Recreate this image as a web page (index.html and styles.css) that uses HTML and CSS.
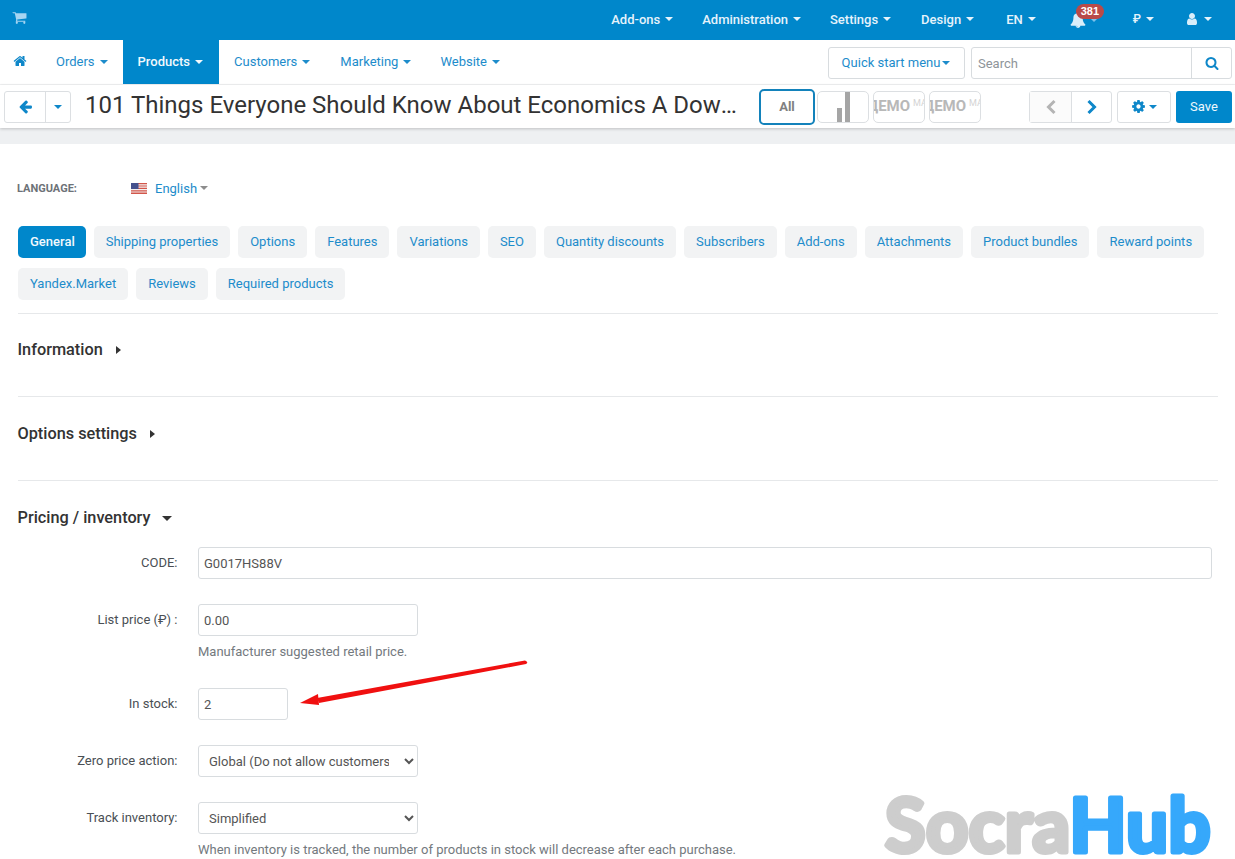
FILE: index.html
```html
<!DOCTYPE html>
<html lang="en">
<head>
<meta charset="utf-8">
<title>Edit product</title>
<link rel="stylesheet" href="styles.css">
</head>
<body>
<div class="page">
  <header class="topbar">
    <svg class="ico cart" viewBox="0 0 1792 1792"><path d="M704 1536q0 52-38 90t-90 38-90-38-38-90 38-90 90-38 90 38 38 90zm896 0q0 52-38 90t-90 38-90-38-38-90 38-90 90-38 90 38 38 90zm128-1088v512q0 24-16.5 42.5t-40.5 21.5l-1044 122q13 60 13 70 0 16-24 64h920q26 0 45 19t19 45-19 45-45 19h-1024q-26 0-45-19t-19-45q0-11 8-31.5t16-36 21.5-40 15.5-29.5l-177-823h-204q-26 0-45-19t-19-45 19-45 45-19h256q16 0 28.5 6.5t19.5 15.5 13 24.5 8 26 5.5 29.5 4.5 26h1201q26 0 45 19t19 45z"/></svg>
    <nav class="topmenu">
      <a class="topitem">Add-ons<i class="caret"></i></a>
      <a class="topitem tight">Administration<i class="caret"></i></a>
      <a class="topitem tight">Settings<i class="caret"></i></a>
      <a class="topitem">Design<i class="caret"></i></a>
      <a class="topitem enitem">EN<i class="caret"></i></a>
      <a class="topitem bellitem">
        <svg class="ico bell" viewBox="0 0 1792 1792"><path d="M912 1696q0-16-16-16-59 0-101.5-42.5t-42.5-101.5q0-16-16-16t-16 16q0 73 51.5 124.5t124.5 51.5q16 0 16-16zm816-288q0 52-38 90t-90 38h-448q0 106-75 181t-181 75-181-75-75-181h-448q-52 0-90-38t-38-90q50-42 91-88t85-119.5 74.5-158.5 50-206 19.5-260q0-152 117-282.5t307-158.5q-8-19-8-39 0-40 28-68t68-28 68 28 28 68q0 20-8 39 190 28 307 158.5t117 282.5q0 139 19.5 260t50 206 74.5 158.5 85 119.5 91 88z"/></svg>
        <span class="badge">381</span><i class="caret"></i>
      </a>
      <a class="topitem rub">₽<i class="caret"></i></a>
      <a class="topitem useritem">
        <svg class="ico user" viewBox="0 0 1792 1792"><path d="M1536 1399q0 109-62.5 187t-150.5 78h-854q-88 0-150.5-78t-62.5-187q0-85 8.5-160.5t31.5-152 58.5-131 94-89 134.5-34.5q131 128 313 128t313-128q76 0 134.5 34.5t94 89 58.5 131 31.5 152 8.5 160.5zm-256-887q0 159-112.5 271.5t-271.5 112.5-271.5-112.5-112.5-271.5 112.5-271.5 271.5-112.5 271.5 112.5 112.5 271.5z"/></svg>
        <i class="caret"></i>
      </a>
    </nav>
  </header>

  <div class="navbar">
    <nav class="mainmenu">
      <a class="mainitem homeitem"><svg class="ico home" viewBox="0 0 1792 1792"><path d="M1472 992v480q0 26-19 45t-45 19h-384v-384h-256v384h-384q-26 0-45-19t-19-45v-480q0-1 .5-3t.5-3l575-474 575 474q1 2 1 6zm223-69l-62 74q-8 9-21 11h-3q-13 0-21-7l-692-577-692 577q-12 8-24 7-13-2-21-11l-62-74q-8-10-7-23.5t11-21.5l719-599q32-26 76-26t76 26l244 204v-195q0-14 9-23t23-9h192q14 0 23 9t9 23v408l219 182q10 8 11 21.5t-7 23.5z"/></svg></a>
      <a class="mainitem ordersitem">Orders<i class="caret"></i></a>
      <a class="mainitem active">Products<i class="caret"></i></a>
      <a class="mainitem">Customers<i class="caret"></i></a>
      <a class="mainitem marketitem">Marketing<i class="caret"></i></a>
      <a class="mainitem">Website<i class="caret"></i></a>
    </nav>
    <div class="navtools">
      <button class="quick">Quick start menu<i class="caret"></i></button>
      <div class="searchbox">
        <input class="searchinput" type="text" placeholder="Search">
        <span class="searchbtn"><svg class="ico search" viewBox="0 0 1792 1792"><path d="M1216 832q0-185-131.5-316.5t-316.5-131.5-316.5 131.5-131.5 316.5 131.5 316.5 316.5 131.5 316.5-131.5 131.5-316.5zm512 832q0 52-38 90t-90 38q-54 0-90-38l-343-342q-179 124-399 124-143 0-273.5-55.5t-225-150-150-225-55.5-273.5 55.5-273.5 150-225 225-150 273.5-55.5 273.5 55.5 225 150 150 225 55.5 273.5q0 220-124 399l343 343q37 37 37 90z"/></svg></span>
      </div>
    </div>
  </div>

  <div class="toolbar">
    <div class="btngroup back">
      <span class="gbtn backarrow"><svg class="ico arrowleft" viewBox="0 0 1792 1792"><path d="M1664 896v128q0 53-32.5 90.5t-84.5 37.5h-704l293 294q38 36 38 90t-38 90l-75 76q-37 37-90 37-52 0-91-37l-651-652q-37-37-37-90 0-52 37-91l651-650q38-38 91-38 52 0 90 38l75 74q38 38 38 91t-38 91l-293 293h704q52 0 84.5 37.5t32.5 90.5z"/></svg></span>
      <span class="gbtn backcaret"><i class="caret"></i></span>
    </div>
    <h1 class="title">101 Things Everyone Should Know About Economics A Down to Earth Guide</h1>
    <div class="thumbs">
      <span class="thumb all">All</span>
      <span class="thumb bars"><i class="bar low"></i><i class="bar high"></i></span>
      <span class="thumb demo"><b>ДЕМО</b><small>МАГ</small></span>
      <span class="thumb demo"><b>ДЕМО</b><small>МАГ</small></span>
    </div>
    <div class="btngroup pager">
      <span class="gbtn pg disabled"><svg class="ico chev" viewBox="0 0 12 16"><path d="M9.5 2 3.5 8l6 6"/></svg></span>
      <span class="gbtn pg"><svg class="ico chev" viewBox="0 0 12 16"><path d="M2.5 2l6 6-6 6"/></svg></span>
    </div>
    <span class="gearbtn"><svg class="ico cog" viewBox="0 0 1792 1792"><path d="M1152 896q0-106-75-181t-181-75-181 75-75 181 75 181 181 75 181-75 75-181zm512-109v222q0 12-8 23t-20 13l-185 28q-19 54-39 91 35 50 107 138 10 12 10 25t-9 23q-27 37-99 108t-94 71q-12 0-26-9l-138-108q-44 23-91 38-16 136-29 186-7 28-36 28h-222q-14 0-24.5-8.5t-11.5-21.5l-28-184q-49-16-90-37l-141 107q-10 9-25 9-14 0-25-11-126-114-165-168-7-10-7-23 0-12 8-23 15-21 51-66.5t54-70.5q-27-50-41-99l-183-27q-13-2-21-12.5t-8-23.5v-222q0-12 8-23t19-13l186-28q14-46 39-92-40-57-107-138-10-12-10-24 0-10 9-23 26-36 98.5-107.5t94.5-71.5q13 0 26 10l138 107q44-23 91-38 16-136 29-186 7-28 36-28h222q14 0 24.5 8.5t11.5 21.5l28 184q49 16 90 37l142-107q9-9 24-9 13 0 25 10 129 119 165 170 7 8 7 22 0 12-8 23-15 21-51 66.5t-54 70.5q26 50 41 98l183 28q13 2 21 12.5t8 23.5z"/></svg><i class="caret"></i></span>
    <button class="save">Save</button>
  </div>
  <div class="band"></div>

  <main class="content">
    <div class="langrow">
      <span class="langlabel">LANGUAGE:</span>
      <span class="flag">
        <svg viewBox="0 0 16 11" width="16" height="11"><rect width="16" height="11" fill="#f4f0f0"/><path d="M0 0h16v1.2H0zM0 2.4h16v1.2H0zM0 4.8h16v1.2H0zM0 7.2h16v1.2H0zM0 9.6h16V11H0z" fill="#d2564a"/><rect width="7.5" height="6" fill="#45528e"/></svg>
      </span>
      <a class="langlink">English</a><i class="caret graycaret"></i>
    </div>

    <div class="tabs">
      <a class="tab current">General</a>
      <a class="tab">Shipping properties</a>
      <a class="tab">Options</a>
      <a class="tab">Features</a>
      <a class="tab">Variations</a>
      <a class="tab">SEO</a>
      <a class="tab">Quantity discounts</a>
      <a class="tab">Subscribers</a>
      <a class="tab">Add-ons</a>
      <a class="tab">Attachments</a>
      <a class="tab">Product bundles</a>
      <a class="tab">Reward points</a>
      <a class="tab">Yandex.Market</a>
      <a class="tab">Reviews</a>
      <a class="tab">Required products</a>
    </div>

    <section class="section">
      <h2 class="sectionhead">Information<i class="tri right"></i></h2>
    </section>
    <section class="section">
      <h2 class="sectionhead">Options settings<i class="tri right"></i></h2>
    </section>
    <section class="section open">
      <h2 class="sectionhead">Pricing / inventory<i class="tri down"></i></h2>
      <div class="form">
        <div class="field codefield">
          <label class="flabel">CODE:</label>
          <input class="finput wide" type="text" value="G0017HS88V">
        </div>
        <div class="field">
          <label class="flabel">List price (₽) :</label>
          <div class="fcontrol">
            <input class="finput mid" type="text" value="0.00">
            <p class="help">Manufacturer suggested retail price.</p>
          </div>
        </div>
        <div class="field stockfield">
          <label class="flabel">In stock:</label>
          <input class="finput short" type="text" value="2">
        </div>
        <div class="field zerofield">
          <label class="flabel">Zero price action:</label>
          <select class="finput mid fselect"><option>Global (Do not allow customers to add the product to cart)</option></select>
        </div>
        <div class="field trackfield">
          <label class="flabel">Track inventory:</label>
          <div class="fcontrol">
            <select class="finput mid fselect"><option>Simplified</option></select>
            <p class="help">When inventory is tracked, the number of products in stock will decrease after each purchase.</p>
          </div>
        </div>
      </div>
    </section>
  </main>

  <svg class="redarrow" viewBox="0 0 240 60" width="240" height="60"><path d="M227 4.5Q231 6 228 8L21 47 19 42Z" fill="#f01010"/><path d="M2 47 20 38 21 49Z" fill="#f01010"/></svg>
  <svg class="watermark" viewBox="0 0 350 80" width="350" height="80"><text class="wm-text" x="1" y="69"><tspan class="wm-a">Socra</tspan><tspan class="wm-b">Hub</tspan></text></svg>
</div>
</body>
</html>
```
FILE: styles.css
```css
* { box-sizing: border-box; }
html, body { margin: 0; padding: 0; }
body { font-family: Roboto, "Liberation Sans", sans-serif; font-size: 13px; color: #333; background: #fff; }
.page { position: relative; width: 1235px; height: 859px; overflow: hidden; }
.ico { display: block; fill: currentColor; }
.caret { display: inline-block; width: 0; height: 0; margin-left: 5px; border-top: 4px solid currentColor; border-left: 4px solid transparent; border-right: 4px solid transparent; vertical-align: middle; }

.topbar { height: 40px; background: #0087cb; display: flex; align-items: center; justify-content: space-between; padding-left: 12px; color: #fff; }
.cart { width: 15px; height: 15px; color: #a6d5f2; margin-top: -6px; }
.topmenu { display: flex; align-items: center; padding-right: 8px; }
.topitem { display: flex; align-items: center; padding: 0 15px 2px; color: #e6f3fb; font-weight: 500; white-space: nowrap; height: 40px; }
.tight { padding-left: 14px; }
.enitem { padding-left: 17px; }
.bellitem { position: relative; padding: 0 20px 0 19px; }
.bell { width: 16px; height: 16px; color: #d9eefa; }
.badge { position: absolute; left: 25px; top: 4px; padding: 0 5px; height: 15px; line-height: 15px; border-radius: 8px; background: #b94a48; color: #fff; font-size: 11px; font-weight: 700; font-family: "Liberation Sans", sans-serif; }
.bellitem .caret { margin-left: 4px; border-top-color: #7cc1ea; }
.rub { padding: 0 16px 2px 15px; font-size: 12px; }
.useritem { padding: 0 15px 2px 15px; }
.user { width: 14px; height: 14px; color: #d9eefa; }

.navbar { height: 45px; display: flex; justify-content: space-between; border-bottom: 1px solid #f1f2f3; background: #fff; }
.mainmenu { display: flex; height: 44px; }
.mainitem { display: flex; align-items: center; padding: 0 15px 1px; color: #1d8ccb; height: 44px; }
.homeitem { padding: 0 14px 1px 13px; }
.home { width: 14px; height: 14px; color: #0e87c9; margin-top: -2px; }
.ordersitem { padding-right: 15px; }
.mainitem.active { background: #0087cb; color: #f2f9fd; font-weight: 500; padding-right: 16px; }
.marketitem { padding-right: 14px; }
.navtools { display: flex; gap: 6px; padding: 7px 3px 0 0; }
.quick { width: 137px; height: 32px; border: 1px solid #d8dcdf; border-radius: 3px; background: #fff; color: #1d8ccb; font: 13px Roboto, sans-serif; padding: 0 1px 2px 0; }
.quick .caret { margin-left: 2px; }
.searchbox { width: 261px; height: 32px; display: flex; border: 1px solid #d8dcdf; border-radius: 3px; }
.searchinput { flex: 1; min-width: 0; border: 0; padding: 0 6px; font: 13px Roboto, sans-serif; background: transparent; outline: none; }
.searchinput::placeholder { color: #8e9499; }
.searchbtn { width: 40px; border-left: 1px solid #d8dcdf; display: flex; align-items: center; justify-content: center; }
.search { width: 14px; height: 14px; color: #0e87c9; }

.toolbar { height: 43px; display: flex; align-items: center; padding: 0 3px 0 4px; background: #fff; box-shadow: 0 1px 3px rgba(0,0,0,.2); position: relative; }
.btngroup { display: flex; height: 32px; border: 1px solid #dcdfe2; border-radius: 3px; }
.gbtn { display: flex; align-items: center; justify-content: center; color: #0e87c9; }
.backarrow { width: 41px; border-right: 1px solid #dcdfe2; }
.backcaret { width: 24px; }
.backcaret .caret { margin: 0; }
.arrowleft { width: 15px; height: 15px; }
.back { flex: none; }
.title { flex: none; width: 652px; margin: 0 22px 4px 14px; font-size: 24px; font-weight: 400; color: #333; line-height: 30px; white-space: nowrap; overflow: hidden; text-overflow: ellipsis; }
.thumbs { display: flex; gap: 4px; flex: none; align-items: center; }
.thumb { display: flex; align-items: center; justify-content: center; width: 52px; height: 32px; border: 1px solid #dcdfe2; border-radius: 5px; overflow: hidden; white-space: nowrap; }
.thumb.all { width: 56px; height: 36px; margin-right: -2px; border: 2px solid #1382bb; color: #808080; font-weight: 700; font-size: 13px; }
.bars { gap: 3px; align-items: flex-end; }
.bar { display: block; background: #a5a5a5; width: 5px; }
.bar.low { height: 14px; width: 5px; }
.bar.high { height: 30px; }
.demo { justify-content: flex-start; color: #b8b8b8; padding-bottom: 2px; }
.demo b { font-size: 15px; margin-left: -7px; flex: none; }
.demo small { font-size: 9px; margin: -6px 0 0 3px; flex: none; color: #d4d4d4; }
.pager { margin-left: 48px; flex: none; }
.pg { width: 41px; }
.pg + .pg { width: 40px; border-left: 1px solid #dcdfe2; }
.pg.disabled { background: #fbfbfb; color: #b4b4b4; }
.chev { width: 12px; height: 16px; fill: none; stroke: currentColor; stroke-width: 3; }
.gearbtn { flex: none; display: flex; align-items: center; justify-content: center; margin-left: 5px; width: 54px; height: 32px; border: 1px solid #dcdfe2; border-radius: 3px; color: #0e87c9; }
.gearbtn .caret { margin-left: 3px; }
.cog { width: 15px; height: 15px; }
.save { flex: none; margin-left: 5px; width: 56px; height: 32px; background: #0087cb; color: #eef8fd; border: 0; border-radius: 3px; font: 13px Roboto, sans-serif; padding: 0; }
.band { height: 16px; background: #eef0f2; }

.content { padding: 0 17px 0 18px; }
.langrow { display: flex; align-items: center; height: 16px; margin-top: 36px; }
.langlabel { width: 114px; font-size: 11px; font-weight: 700; color: #6d7277; margin-left: -1px; padding-top: 1px; }
.flag { width: 24px; display: block; height: 11px; line-height: 0; }
.langlink { color: #1d8ccb; }
.graycaret { color: #8d8d8d; margin-left: 3px; }

.tabs { display: flex; flex-wrap: wrap; gap: 10px 8px; margin-top: 30px; padding-bottom: 13px; border-bottom: 1px solid #e6e8ea; }
.tab { height: 32px; line-height: 31px; padding: 0 12px; background: #f2f3f4; color: #1d8ccb; border-radius: 5px; white-space: nowrap; }
.tab.current { background: #0087cb; color: #f2f9fd; font-weight: 500; padding-right: 11px; }

.section { height: 83px; border-bottom: 1px solid #e6e8ea; padding-top: 26px; }
.section + .section { height: 84px; padding-top: 27px; }
.section + .section.open { border: 0; height: auto; }
.sectionhead { margin: 0 0 0 -0.5px; font-size: 16.3px; line-height: 20px; font-weight: 500; color: #333; display: flex; align-items: center; }
.tri { display: inline-block; width: 0; height: 0; margin-left: 13px; }
.tri.right { border-left: 5px solid #333; border-top: 4px solid transparent; border-bottom: 4px solid transparent; }
.tri.down { border-top: 5px solid #333; border-left: 5px solid transparent; border-right: 5px solid transparent; margin-left: 11px; }

.form { margin-top: 19px; }
.field { display: flex; align-items: flex-start; }
.flabel { flex: none; width: 159.5px; text-align: right; line-height: 32px; color: #4a4f54; }
.fcontrol { flex: none; }
.finput { display: block; height: 32px; margin-left: 20.5px; border: 1px solid #d8dcdf; border-radius: 3px; background: #fff; padding: 0 5px; color: #555; font: 13px Roboto, sans-serif; }
.wide { width: 1014px; }
.mid { width: 220px; }
.short { width: 90px; }
.fselect { padding: 0 12px 0 6px; }
.help { margin: 8px 0 0 20.5px; line-height: 16px; color: #73797e; white-space: nowrap; }
.field + .field { margin-top: 25px; }
.stockfield { margin-top: 28px !important; }

.redarrow { position: absolute; left: 298px; top: 656px; }
.watermark { position: absolute; left: 884px; top: 783px; }
.wm-text { font-family: Lato, sans-serif; font-size: 74px; font-weight: 700; letter-spacing: 0.4px; stroke-width: 5px; stroke-linejoin: round; stroke-linecap: round; }
.wm-a { fill: #cdcdcd; stroke: #cdcdcd; }
.wm-b { fill: #36a8fb; stroke: #36a8fb; }
```
